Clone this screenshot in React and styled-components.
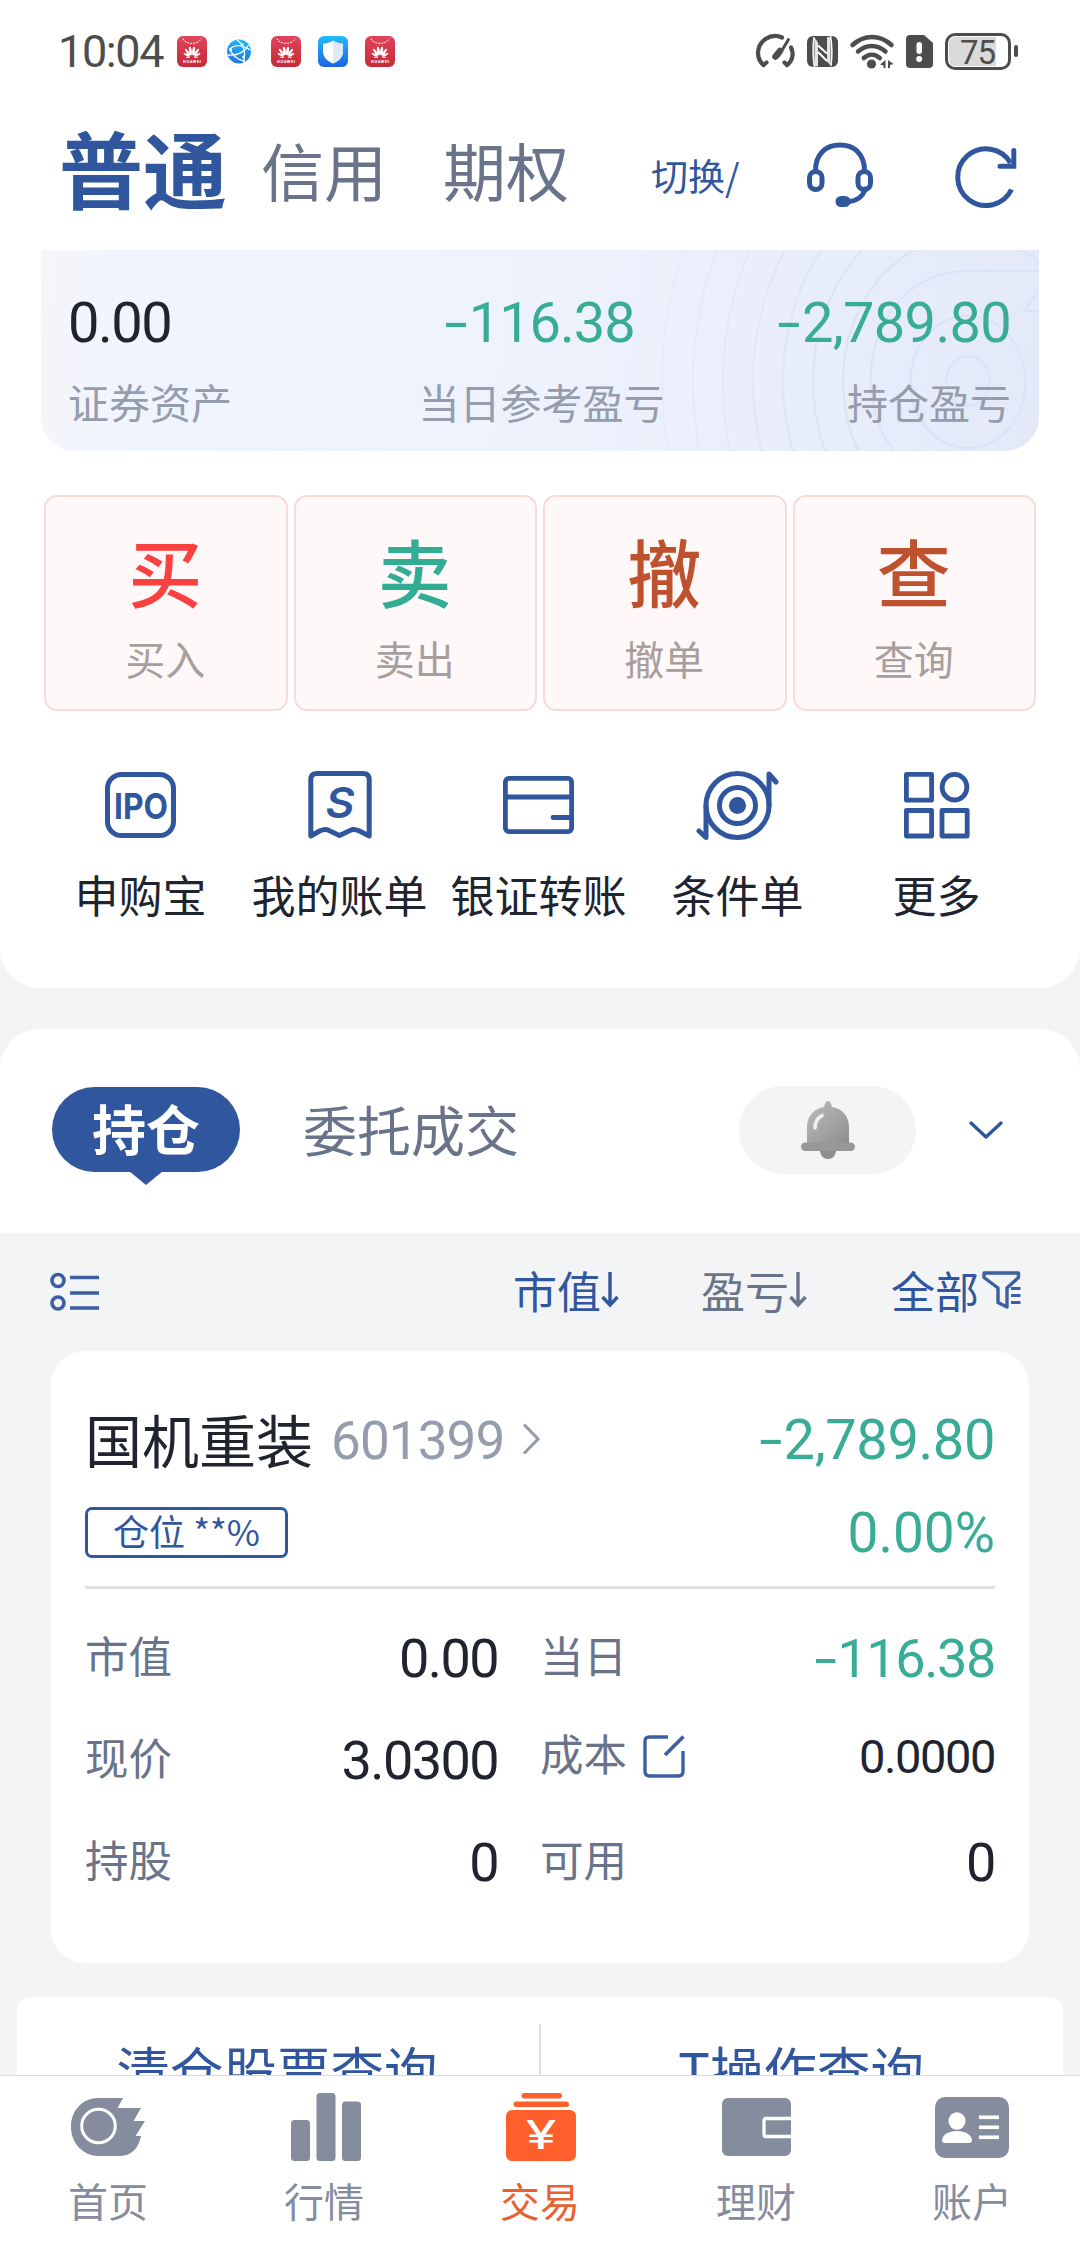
import React from 'react';
import styled, { createGlobalStyle } from 'styled-components';

const BLUE = '#30579d';
const GREEN = '#39ac95';
const DARK = '#20242f';
const GREY = '#69738a';
const LIGHT = '#959cac';
const NAV = '#848c9e';

const GlobalStyle = createGlobalStyle`
* {
  margin: 0;
  padding: 0;
  box-sizing: border-box;
}

body {
  background: #f3f4f6;
  font-family: "Noto Sans CJK SC", "Noto Sans", sans-serif;
  color: ${DARK};
}

svg {
  display: block;
  flex: none;
  overflow: visible;
}
`;

/* ---------- icons ---------- */

const HuaweiIcon = () => (
  <svg width="30" height="31" viewBox="0 0 30 31">
    <defs>
      <linearGradient id="hw" x1="0" y1="0" x2="0" y2="1">
        <stop offset="0" stopColor="#e0455c" />
        <stop offset="1" stopColor="#c42a36" />
      </linearGradient>
    </defs>
    <rect width="30" height="31" rx="6" fill="url(#hw)" />
    <path d="M6 2.500c2 6.500 16 6.500 18 0" fill="none" stroke="#fff" strokeWidth="1" strokeDasharray="2 1" />
    <g fill="#fff">
      <ellipse cx="13.400" cy="15" rx="1.400" ry="4.400" transform="rotate(-8 13.400 15)" />
      <ellipse cx="16.600" cy="15" rx="1.400" ry="4.400" transform="rotate(8 16.600 15)" />
      <ellipse cx="10.600" cy="16.200" rx="1.200" ry="4.200" transform="rotate(-35 10.600 16.200)" />
      <ellipse cx="19.400" cy="16.200" rx="1.200" ry="4.200" transform="rotate(35 19.400 16.200)" />
      <ellipse cx="9.600" cy="18.800" rx="1" ry="3.400" transform="rotate(-62 9.600 18.800)" />
      <ellipse cx="20.400" cy="18.800" rx="1" ry="3.400" transform="rotate(62 20.400 18.800)" />
      <rect x="9" y="20.800" width="4" height="1" rx=".5" />
      <rect x="17" y="20.800" width="4" height="1" rx=".5" />
    </g>
    <text x="15" y="27.300" textAnchor="middle" fontSize="4" fontWeight="700" fill="#fff" fontFamily="Roboto, sans-serif" textLength="18">HUAWEI</text>
  </svg>
);

const GlobeIcon = () => (
  <svg width="30" height="31" viewBox="0 0 30 31">
    <defs>
      <linearGradient id="gl" x1="0" y1="0" x2="0" y2="1">
        <stop offset="0" stopColor="#22b5f5" />
        <stop offset="1" stopColor="#2277e8" />
      </linearGradient>
    </defs>
    <rect x=".5" y=".5" width="29" height="30" rx="6" fill="#fff" stroke="#f4f4f4" />
    <circle cx="15" cy="15.500" r="12" fill="url(#gl)" />
    <path d="M13 4c6 4 9 12 6.500 22.500M3.500 19c8 1 17-2 21-10M6 13c1 5 7 11 15 12.500M6 13c4-4 11-5 20.500 1" fill="none" stroke="#fff" strokeWidth="1.300" />
    <circle cx="6.500" cy="13.500" r="1.500" fill="#fff" />
    <circle cx="18.500" cy="8.500" r="1.300" fill="#fff" />
    <circle cx="19.500" cy="21" r="1.300" fill="#fff" />
  </svg>
);

const ShieldIcon = () => (
  <svg width="30" height="31" viewBox="0 0 30 31">
    <defs>
      <linearGradient id="sh" x1="0" y1="0" x2="0" y2="1">
        <stop offset="0" stopColor="#22bdf8" />
        <stop offset="1" stopColor="#1d62e6" />
      </linearGradient>
    </defs>
    <rect width="30" height="31" rx="6" fill="url(#sh)" />
    <path d="M15 4.500c3 2.200 6 3 10 3.300v7.700c0 6-4.500 9.800-10 12-5.500-2.200-10-6-10-12V7.800c4-.3 7-1.100 10-3.300z" fill="#fff" />
    <path d="M15 4.500c3 2.200 6 3 10 3.300v7.700c0 6-4.500 9.800-10 12z" fill="#dfe9f7" />
  </svg>
);

const GaugeIcon = () => (
  <svg width="39" height="34" viewBox="0 0 39 34" fill="none" stroke="#4d4d4d" strokeWidth="4.200" strokeLinecap="round">
    <path d="M7.500 31C-.5 24 .5 11 9.500 5c5.500-3.600 12-3.600 16.500-1.500" />
    <path d="M35 13.500c3.500 7 1 14-4 17.500" />
    <path d="M10.500 28.500L7.500 31M28.500 28.500l2.500 2.500" />
    <path d="M32.500 5.500L22.500 22" strokeWidth="3" />
    <path d="M24 17L19.500 22.500" strokeWidth="6.500" />
  </svg>
);

const NfcIcon = () => (
  <svg width="31" height="31" viewBox="0 0 31 31">
    <rect width="31" height="31" rx="6" fill="#4d4d4d" />
    <path d="M7 1c-1.200 9-1.200 20 .5 30M23.500 0c1.700 10 1.700 21 .5 30" fill="none" stroke="#fff" strokeWidth="1.500" />
    <path d="M7.500 1.500l3.500 5v24l-3.500-.5zM23.500 29.500l-3.500-4V1l3.500.5z" fill="#fff" opacity=".85" />
    <path d="M11 9.500l9 8M11 16l9 9" stroke="#fff" strokeWidth="2" />
  </svg>
);

const WifiIcon = () => (
  <svg width="44" height="35" viewBox="0 0 44 35">
    <g fill="none" stroke="#4d4d4d" strokeWidth="4.500" strokeLinecap="round">
      <path d="M2.500 11C14 .2 30 .2 41.500 11" />
      <path d="M8 17.500c8.500-7.500 19-7.500 27.500 0" />
      <path d="M13.800 24c5-4.500 11-4.500 16 0" />
    </g>
    <circle cx="21.500" cy="30" r="4.600" fill="#4d4d4d" />
    <path d="M35.500 26v8h-2v-2.500L30 30.500zM38 26l5.500 4-3.500 1v3h-2z" fill="#4d4d4d" />
  </svg>
);

const SimIcon = () => (
  <svg width="27" height="33" viewBox="0 0 27 33">
    <path d="M4 0h14l9 8v21c0 2.500-1.500 4-4 4H4c-2.500 0-4-1.500-4-4V4c0-2.500 1.500-4 4-4z" fill="#4d4d4d" />
    <rect x="10.500" y="7" width="5.500" height="12" rx="2.700" fill="#fff" />
    <circle cx="13.200" cy="24" r="3" fill="#fff" />
  </svg>
);

const HeadsetIcon = () => (
  <svg width="66" height="65" viewBox="0 0 66 65" fill="none" stroke={BLUE} strokeWidth="5" strokeLinecap="round">
    <path d="M8.500 29.500C8 12 19 3 33 3s25 9 24.500 26.500" />
    <rect x="2.500" y="29.500" width="12.500" height="18" rx="6.200" />
    <rect x="51" y="29.500" width="12.500" height="18" rx="6.200" />
    <path d="M58 47c-2 8-9 12.500-18 12.500" />
    <rect x="31.500" y="57" width="9" height="5" rx="2.500" strokeWidth="6" />
  </svg>
);

const RefreshIcon = () => (
  <svg width="62" height="62" viewBox="0 0 62 62" fill="none" stroke={BLUE} strokeWidth="5">
    <path d="M55.500 43.500A28.300 28.300 0 1 1 54.500 17" />
    <path d="M57.800 4.500v15.800H44" strokeLinecap="round" />
  </svg>
);

const IpoIcon = () => (
  <svg width="71" height="66" viewBox="0 0 71 66">
    <rect x="2.500" y="2.500" width="66" height="61" rx="14" fill="none" stroke={BLUE} strokeWidth="5" />
    <text x="36" y="46.500" textAnchor="middle" fontFamily="Inter, sans-serif" fontWeight="700" fontSize="36" textLength="54" lengthAdjust="spacingAndGlyphs" fill={BLUE}>IPO</text>
  </svg>
);

const BillIcon = () => (
  <svg width="64" height="68" viewBox="0 0 64 68">
    <path d="M2.800 65V8.500c0-4 2-6 6-6h46.400c4 0 6 2 6 6V65L51 59.800c-5-2.400-7.500-1.500-11 .7l-8.500 4-8.500-4c-3.500-2.200-6-3.100-11-.7z" fill="none" stroke={BLUE} strokeWidth="5" strokeLinejoin="round" />
    <text x="32" y="47" textAnchor="middle" fontFamily="Inter, sans-serif" fontStyle="italic" fontWeight="600" fontSize="43" textLength="29" lengthAdjust="spacingAndGlyphs" fill={BLUE}>S</text>
  </svg>
);

const TransferIcon = () => (
  <svg width="71" height="58" viewBox="0 0 71 58" fill="none" stroke={BLUE} strokeWidth="4.800">
    <rect x="2.400" y="2.400" width="66.200" height="53.200" rx="3.500" />
    <path d="M2 21h66" />
    <path d="M50 41.500h18" strokeLinecap="round" />
  </svg>
);

const TargetIcon = () => (
  <svg width="81" height="69" viewBox="0 0 81 69" fill="none" stroke={BLUE} strokeWidth="5" strokeLinecap="round" strokeLinejoin="round">
    <ellipse cx="40.500" cy="34.500" rx="31.500" ry="32" />
    <ellipse cx="40.500" cy="34.500" rx="18" ry="18" />
    <circle cx="40.500" cy="34.500" r="8.500" fill={BLUE} stroke="none" />
    <path d="M72 34.500V3l7 8M9 34.500V66.500l-7-6.500" />
  </svg>
);

const MoreIcon = () => (
  <svg width="65" height="66" viewBox="0 0 65 66" fill="none" stroke={BLUE} strokeWidth="4.800" strokeLinejoin="round">
    <rect x="2.400" y="2.400" width="25.200" height="25.800" />
    <ellipse cx="50.500" cy="15.200" rx="12.400" ry="12.800" />
    <rect x="2.400" y="38.500" width="25.200" height="25.500" />
    <rect x="38" y="38.500" width="25.200" height="25.500" />
  </svg>
);

const BellIcon = () => (
  <svg width="54" height="58" viewBox="0 0 54 58">
    <defs>
      <linearGradient id="bl" x1="0" y1="0" x2="1" y2="1">
        <stop offset="0" stopColor="#bcbcbc" />
        <stop offset="1" stopColor="#8f8f8f" />
      </linearGradient>
    </defs>
    <circle cx="27" cy="50" r="8" fill="#8e8e8e" />
    <path d="M27 0c2.500 0 3 3 4 6 11 2 17 10 17 20v16H6V26C6 16 12 8 23 6c1-3 1.500-6 4-6z" fill="url(#bl)" />
    <rect x="0" y="41.500" width="54" height="8.500" rx="4.200" fill="#989898" />
    <path d="M14 27c0-6 2.500-10 7-12.500" fill="none" stroke="#f1f1f1" strokeWidth="3.600" strokeLinecap="round" />
  </svg>
);

const ChevronDown = () => (
  <svg width="34" height="18" viewBox="0 0 34 18" fill="none" stroke={BLUE} strokeWidth="3.400" strokeLinecap="round" strokeLinejoin="round">
    <path d="M2 2l15 14L32 2" />
  </svg>
);

const ChevronRight = () => (
  <svg width="18" height="32" viewBox="0 0 18 32" fill="none" stroke={LIGHT} strokeWidth="3.200">
    <path d="M2 1.500L16 16 2 30.500" />
  </svg>
);

const ListIcon = () => (
  <svg width="49" height="40" viewBox="0 0 49 40" fill="none" stroke="#3b5fa2" strokeWidth="3.600">
    <circle cx="8" cy="8.500" r="6" />
    <circle cx="8" cy="31" r="6" />
    <path d="M20 5.500h29M20 21h29M20 36h29" />
  </svg>
);

const SortArrow = () => (
  <svg width="18" height="36" viewBox="0 0 18 36" fill="none" stroke="currentColor" strokeWidth="3.400">
    <path d="M9 0v33M1.500 25L9 33l7.500-8" />
  </svg>
);

const FilterIcon = () => (
  <svg width="39" height="38" viewBox="0 0 39 38" fill="none" stroke="#3b5fa2" strokeWidth="3.400" strokeLinejoin="round">
    <path d="M2 2h34.500v4.500L25 17v19l-9-4.500V17L2 6.500z" />
    <path d="M29 17.500h9.500M29 24.500h9.500M29 31.500h9.500" strokeWidth="3" />
  </svg>
);

const EditIcon = () => (
  <svg width="42" height="43" viewBox="0 0 42 43" fill="none" stroke="#3b5fa2" strokeWidth="3.400">
    <path d="M25 2H6.500C3.500 2 2 3.500 2 6.500v29.500C2 39 3.500 41 6.500 41h29c3 0 4.500-2 4.500-5V16" />
    <path d="M22 20L40.500 1.500" strokeWidth="3.800" />
  </svg>
);

const HomeIcon = () => (
  <svg width="74" height="58" viewBox="0 0 74 58">
    <path d="M27 0h25l-5.500 10H70l-7.500 13H74l-9.500 15H70C68 49 61 58 49 58H28C12 58 0 45 0 29 0 12 12 0 27 0z" fill={NAV} />
    <circle cx="27.500" cy="28" r="16.800" fill="none" stroke="#fff" strokeWidth="3" />
  </svg>
);

const MarketIcon = () => (
  <svg width="68" height="68" viewBox="-1 0 68 68" fill={NAV}>
    <rect x="0" y="27" width="19" height="41" rx="3.500" />
    <rect x="25.500" y="0" width="19" height="68" rx="3.500" />
    <rect x="51" y="8.500" width="19" height="59.500" rx="3.500" />
  </svg>
);

const TradeIcon = () => (
  <svg width="70" height="68" viewBox="-1 0 70 68" fill="#fe5f2b">
    <rect x="15.500" y="0" width="40.500" height="5.500" rx="2.700" />
    <rect x="7.500" y="8.500" width="55.500" height="5.500" rx="2.700" />
    <rect x="0" y="17" width="70" height="51" rx="6" />
    <text x="35" y="55.500" textAnchor="middle" fontFamily="Roboto, sans-serif" fontSize="40" fontWeight="400" textLength="30" lengthAdjust="spacingAndGlyphs" fill="#fff">¥</text>
  </svg>
);

const WealthIcon = () => (
  <svg width="69" height="58" viewBox="0 0 69 58">
    <rect width="69" height="58" rx="6" fill={NAV} />
    <path d="M69 20.500H44c-1.500 0-2 .8-2 2v14c0 1.200.5 2 2 2h25" fill="none" stroke="#fff" strokeWidth="3.300" />
  </svg>
);

const AccountIcon = () => (
  <svg width="74" height="61" viewBox="0 0 74 61">
    <rect width="74" height="61" rx="10" fill={NAV} />
    <g fill="#fff">
      <ellipse cx="22" cy="24" rx="8.500" ry="8.800" />
      <path d="M7 43c1-5.500 6.500-9 15-9s14 3.500 15 9c0 2-1.200 3-3 3H10c-1.800 0-3-1-3-3z" />
      <rect x="44" y="18.500" width="20" height="3.600" />
      <rect x="44" y="28.500" width="20" height="3.600" />
      <rect x="44" y="38.500" width="20" height="3.600" />
    </g>
  </svg>
);

const Rings = () => (
  <RingsSvg width="400" height="201" viewBox="0 0 400 201" fill="none" stroke="#d8e3f6" strokeWidth="2">
    <ellipse cx="329" cy="131" rx="22" ry="25" />
    <ellipse cx="329" cy="132" rx="57.500" ry="66" />
    <path d="M255 201C228 165 228 120 238 90c16-46 50-69 92-69h70" />
    {[125, 155, 185, 215, 245, 275, 306].map((r, i) => (
      <ellipse key={r} cx="329" cy="131" rx={r} ry={r * 1.16} opacity={1 - i * 0.12} />
    ))}
    <path d="M400 40l-15 21h15" />
  </RingsSvg>
);

/* ---------- page ---------- */

const quick = [
  ['申购宝', IpoIcon],
  ['我的账单', BillIcon],
  ['银证转账', TransferIcon],
  ['条件单', TargetIcon],
  ['更多', MoreIcon],
];

const actions = [
  ['买', '买入', '#fb4040'],
  ['卖', '卖出', '#33ac95'],
  ['撤', '撤单', '#bf522e'],
  ['查', '查询', '#bf522e'],
];

const tabs = [
  ['首页', HomeIcon],
  ['行情', MarketIcon],
  ['交易', TradeIcon],
  ['理财', WealthIcon],
  ['账户', AccountIcon],
];

const App = () => {
  return (
    <Screen>
      <GlobalStyle />
      <TopPanel>
        <StatusBar>
          <Clock>10:04</Clock>
          <Notices>
            <HuaweiIcon />
            <GlobeIcon />
            <HuaweiIcon />
            <ShieldIcon />
            <HuaweiIcon />
          </Notices>
          <Signals>
            <GaugeIcon />
            <NfcIcon />
            <WifiIcon />
            <SimIcon />
            <Battery><Level>75</Level></Battery>
          </Signals>
        </StatusBar>

        <Header>
          <Title>普通</Title>
          <HeaderTab $gap={34}>信用</HeaderTab>
          <HeaderTab $gap={56}>期权</HeaderTab>
          <Switch>切换/</Switch>
          <HeaderIcon $top={11} $left={68}><HeadsetIcon /></HeaderIcon>
          <HeaderIcon $top={16} $left={83}><RefreshIcon /></HeaderIcon>
        </Header>

        <Summary>
          <Rings />
          <Stat $align="left">
            <Amount $size={56} $tight={1.5}>0.00</Amount>
            <StatLabel>证券资产</StatLabel>
          </Stat>
          <Stat $align="center">
            <Amount $size={56} $color={GREEN} $tight={1}><Minus>-</Minus>116.38</Amount>
            <StatLabel>当日参考盈亏</StatLabel>
          </Stat>
          <Stat $align="right">
            <Amount $size={56} $color={GREEN} $tight={0.7}><Minus>-</Minus>2,789.80</Amount>
            <StatLabel>持仓盈亏</StatLabel>
          </Stat>
        </Summary>

        <Actions>
          {actions.map(([glyph, label, color]) => (
            <Action key={label}>
              <ActionGlyph $color={color}>{glyph}</ActionGlyph>
              <ActionLabel>{label}</ActionLabel>
            </Action>
          ))}
        </Actions>

        <QuickRow>
          {quick.map(([label, Icon]) => (
            <QuickItem key={label}>
              <QuickIcon><Icon /></QuickIcon>
              {label}
            </QuickItem>
          ))}
        </QuickRow>
      </TopPanel>

      <HoldingTabs>
        <ActiveTab>持仓</ActiveTab>
        <PlainTab>委托成交</PlainTab>
        <BellPill><BellIcon /></BellPill>
        <ChevronDown />
      </HoldingTabs>

      <SortBar>
        <ListIcon />
        <SortItem $color={BLUE} $left={414}>市值<SortArrow /></SortItem>
        <SortItem $color={GREY} $left={82}>盈亏<SortArrow /></SortItem>
        <SortItem $color={BLUE} $left={84} $gap={3}>全部<FilterIcon /></SortItem>
      </SortBar>

      <StockCard>
        <StockHead>
          <StockName>国机重装</StockName>
          <StockCode>601399</StockCode>
          <ChevronRight />
          <Amount $size={56} $color={GREEN} $push><Minus>-</Minus>2,789.80</Amount>
        </StockHead>
        <StockSub>
          <PositionTag>仓位 **%</PositionTag>
          <Amount $size={55} $color={GREEN} $push $tight={0}>0.00%</Amount>
        </StockSub>
        <Details>
          <Detail><DetailLabel>市值</DetailLabel><Amount $size={54} $push $tight={1.6}>0.00</Amount></Detail>
          <Detail><DetailLabel>当日</DetailLabel><Amount $size={54} $color={GREEN} $push $tight={1.4}><Minus>-</Minus>116.38</Amount></Detail>
          <Detail><DetailLabel>现价</DetailLabel><Amount $size={54} $push $tight={1.6}>3.0300</Amount></Detail>
          <Detail $raised><DetailLabel>成本</DetailLabel><EditIcon /><Amount $size={47} $push $tight={1.4}>0.0000</Amount></Detail>
          <Detail><DetailLabel>持股</DetailLabel><Amount $size={54} $push $tight={1.6}>0</Amount></Detail>
          <Detail><DetailLabel>可用</DetailLabel><Amount $size={54} $push $tight={1.4}>0</Amount></Detail>
        </Details>
      </StockCard>

      <LinkCard>
        <CardLink>清仓股票查询</CardLink>
        <LinkDivider />
        <CardLink>T操作查询</CardLink>
      </LinkCard>

      <BottomNav>
        {tabs.map(([label, Icon]) => (
          <NavItem key={label} $active={label === '交易'}>
            <NavIcon><Icon /></NavIcon>
            {label}
          </NavItem>
        ))}
      </BottomNav>
    </Screen>
  );
};

const Screen = styled.div`
  width: 1080px;
  height: 2244px;
  overflow: hidden;
  display: flex;
  flex-direction: column;
  background: #f3f4f6;
`;

const TopPanel = styled.section`
  flex: none;
  height: 988px;
  background: #fff;
  border-radius: 0 0 40px 40px;
`;

const StatusBar = styled.div`
  height: 102px;
  padding: 0 62px 0 58px;
  display: flex;
  align-items: center;
`;

const Clock = styled.span`
  width: 119px;
  padding-top: 2px;
  font: 400 45px/50px Roboto, sans-serif;
  letter-spacing: -1.4px;
  color: #4d4d4d;
`;

const Notices = styled.div`
  display: flex;
  gap: 17px;
`;

const Signals = styled.div`
  margin-left: auto;
  display: flex;
  align-items: center;
  gap: 12px;
`;

const Battery = styled.div`
  position: relative;
  width: 66px;
  height: 37px;
  margin-right: 7px;
  padding: 1px 12px 1px 1px;
  border: 3px solid #4d4d4d;
  border-radius: 10px;

  &::after {
    content: "";
    position: absolute;
    right: -10px;
    top: 9px;
    width: 4px;
    height: 12px;
    border-radius: 2px;
    background: #4d4d4d;
  }
`;

const Level = styled.div`
  height: 100%;
  padding-left: 11px;
  border-radius: 6px 0 0 6px;
  background: #dadada;
  font: 400 33px/31px Roboto, sans-serif;
  letter-spacing: -1px;
  color: #4d4d4d;
`;

const Header = styled.header`
  height: 148px;
  padding: 0 0 15px 59px;
  display: flex;
  align-items: center;
  white-space: nowrap;
`;

const Title = styled.h1`
  margin-bottom: 4px;
  font-size: 84px;
  line-height: 90px;
  font-weight: 700;
  color: ${BLUE};
`;

const HeaderTab = styled.span`
  margin-left: ${(p) => p.$gap}px;
  font-size: 63px;
  line-height: 70px;
  color: ${GREY};
`;

const Switch = styled.span`
  width: 88px;
  margin: 13px 0 0 82px;
  font-size: 37px;
  line-height: 44px;
  color: ${BLUE};
`;

const HeaderIcon = styled.span`
  margin: ${(p) => p.$top}px 0 0 ${(p) => p.$left}px;
`;

const Summary = styled.div`
  position: relative;
  height: 201px;
  margin: 0 41px;
  padding: 42px 28px 0 27px;
  display: grid;
  grid-template-columns: 1fr 1fr 1fr;
  border-radius: 0 0 34px 34px;
  background: linear-gradient(97deg, #f5f6fb 0%, #f0f4fd 12%, #eef2fd 50%, #e8edfa 78%, #e4e9f8 100%);
  overflow: hidden;
`;

const RingsSvg = styled.svg`
  position: absolute;
  right: 0;
  top: 0;
`;

const Stat = styled.div`
  position: relative;
  text-align: ${(p) => p.$align};
  white-space: nowrap;
  ${(p) => p.$align === 'center' && 'padding-left: 4px;'}
`;

const Amount = styled.div`
  ${(p) => p.$push && 'margin-left: auto;'}
  padding-top: 1px;
  font: 400 ${(p) => p.$size}px/60px Roboto, sans-serif;
  letter-spacing: -${(p) => p.$tight ?? 0.4}px;
  color: ${(p) => p.$color || DARK};
`;

const Minus = styled.span`
  display: inline-block;
  margin-right: 6px;
  transform: scaleX(1.5);
`;

const StatLabel = styled.div`
  margin-top: 23px;
  font-size: 41px;
  line-height: 50px;
  color: ${LIGHT};
`;

const Actions = styled.div`
  margin: 44px 44px 0;
  display: grid;
  grid-template-columns: repeat(4, 1fr);
  gap: 6px;
`;

const Action = styled.div`
  height: 216px;
  padding: 33px 1px 0 0;
  border: 2px solid #f8dada;
  border-radius: 13px;
  background: #fef8f8;
  text-align: center;
`;

const ActionGlyph = styled.div`
  font-size: 74px;
  line-height: 80px;
  font-weight: 500;
  color: ${(p) => p.$color};
`;

const ActionLabel = styled.div`
  margin-top: 23px;
  font-size: 40px;
  line-height: 50px;
  color: #a89e9e;
`;

const QuickRow = styled.div`
  padding: 59px 41px 0;
  display: grid;
  grid-template-columns: repeat(5, 199px);
`;

const QuickItem = styled.div`
  display: flex;
  flex-direction: column;
  align-items: center;
  font-size: 44px;
  line-height: 50px;
  white-space: nowrap;
`;

const QuickIcon = styled.div`
  height: 70px;
  margin-bottom: 29px;
  display: flex;
  align-items: center;
`;

const HoldingTabs = styled.section`
  flex: none;
  height: 204px;
  margin-top: 41px;
  padding: 0 77px 2px 52px;
  display: flex;
  align-items: center;
  border-radius: 40px 40px 0 0;
  background: #fff;
`;

const ActiveTab = styled.div`
  position: relative;
  width: 188px;
  height: 85px;
  margin-bottom: 2px;
  border-radius: 43px;
  background: ${BLUE};
  color: #fff;
  font-size: 54px;
  line-height: 81px;
  font-weight: 700;
  text-align: center;

  &::after {
    content: "";
    position: absolute;
    left: 77px;
    top: 84px;
    border: 17px solid transparent;
    border-top: 14px solid ${BLUE};
    border-bottom: 0;
  }
`;

const PlainTab = styled.div`
  margin: 0 0 2px 63px;
  font-size: 54px;
  line-height: 80px;
  color: ${GREY};
`;

const BellPill = styled.div`
  width: 177px;
  height: 88px;
  margin: 0 53px 0 auto;
  display: flex;
  align-items: center;
  justify-content: center;
  border-radius: 44px;
  background: #f4f4f5;
`;

const SortBar = styled.div`
  flex: none;
  height: 118px;
  padding: 0 59px 0 50px;
  display: flex;
  align-items: center;
`;

const SortItem = styled.div`
  margin-left: ${(p) => p.$left}px;
  display: flex;
  align-items: center;
  gap: ${(p) => p.$gap || 0}px;
  font-size: 44px;
  line-height: 50px;
  padding-bottom: 4px;
  white-space: nowrap;
  color: ${(p) => p.$color};
`;

const StockCard = styled.section`
  flex: none;
  height: 612px;
  margin: 0 51px;
  padding: 58px 34px 0;
  border-radius: 34px;
  background: #fff;
`;

const StockHead = styled.div`
  height: 60px;
  display: flex;
  align-items: center;
`;

const StockName = styled.h2`
  padding-bottom: 2px;
  font-size: 57px;
  line-height: 60px;
  font-weight: 400;
`;

const StockCode = styled.span`
  width: 191px;
  margin-left: 18px;
  padding-top: 3px;
  font: 400 53px/60px Roboto, sans-serif;
  letter-spacing: -0.9px;
  color: ${LIGHT};
`;

const StockSub = styled.div`
  height: 120px;
  padding: 15px 0 6px;
  display: flex;
  align-items: center;
  border-bottom: 3px solid #dfe1e7;
`;

const PositionTag = styled.span`
  width: 203px;
  height: 51px;
  border: 3px solid ${BLUE};
  border-radius: 7px;
  font-size: 36px;
  line-height: 41px;
  text-align: center;
  color: ${BLUE};
`;

const Details = styled.div`
  padding-top: 39px;
  display: grid;
  grid-template-columns: 413px 455px;
  column-gap: 42px;
  row-gap: 42px;
`;

const Detail = styled.div`
  height: 60px;
  display: flex;
  align-items: center;
  gap: 16px;
  ${(p) => p.$raised && 'margin-top: -4px;'}
`;

const DetailLabel = styled.span`
  font-size: 43.5px;
  line-height: 50px;
  padding-bottom: 6px;
  color: ${GREY};
`;

const LinkCard = styled.section`
  flex: none;
  height: 78px;
  margin: 34px 17px 0;
  padding-top: 27px;
  display: flex;
  overflow: hidden;
  border-radius: 13px 13px 0 0;
  background: #fff;
`;

const LinkDivider = styled.div`
  width: 2px;
  height: 90px;
  background: #dfe1e7;
`;

const CardLink = styled.a`
  flex: 1;
  padding: 15px 2px 0 0;
  font-size: 53.5px;
  line-height: 60px;
  text-align: center;
  color: ${BLUE};
`;

const BottomNav = styled.nav`
  flex: none;
  height: 169px;
  display: grid;
  grid-template-columns: repeat(5, 1fr);
  border-top: 1px solid #d9dbdf;
  background: #fff;
`;

const NavItem = styled.div`
  padding-top: 16px;
  display: flex;
  flex-direction: column;
  align-items: center;
  font-size: 40px;
  line-height: 50px;
  color: ${(p) => (p.$active ? '#e9612f' : NAV)};
`;

const NavIcon = styled.div`
  height: 70px;
  margin-bottom: 13px;
  display: flex;
  align-items: center;
`;

export default App;
